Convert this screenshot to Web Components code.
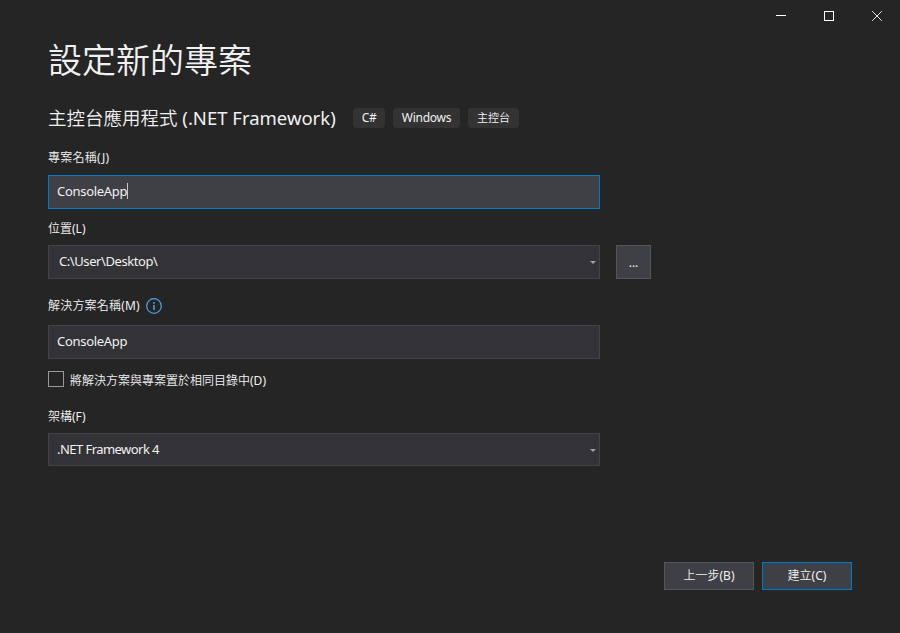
<!DOCTYPE html>
<html lang="zh-Hant">
<head>
<meta charset="utf-8">
<title>設定新的專案</title>
<style>
html,body{margin:0;height:100%;background:#252526}
body{font:350 12px/16px "Noto Sans","Noto Sans CJK TC",sans-serif;color:#f1f1f1;overflow:hidden}
</style>
</head>
<body>
<project-dialog></project-dialog>
<script>
function define(name, html) {
  const t = document.createElement('template');
  t.innerHTML = html;
  customElements.define(name, class extends HTMLElement {
    constructor() {
      super();
      this.attachShadow({mode: 'open'}).append(t.content.cloneNode(true));
    }
  });
}

define('window-controls', `
<style>
:host{display:flex;justify-content:flex-end;height:32px}
svg{width:48px;height:32px;fill:none;stroke:#fff;stroke-width:1}
</style>
<svg viewBox="0 0 48 32"><path d="M20 15.5h10"/></svg>
<svg viewBox="0 0 48 32"><rect x="20.5" y="11.5" width="9" height="9"/></svg>
<svg viewBox="0 0 48 32"><path d="M20.2 11.2l9.6 9.6M29.8 11.2l-9.6 9.6" stroke="#e4e4e4"/></svg>`);

define('tag-chip', `
<style>
:host{display:flex;justify-content:center;box-sizing:border-box;height:20px;line-height:20px;border-radius:4px;background:#333334;white-space:nowrap;font-weight:400}
</style><slot></slot>`);

define('field-label', `
<style>
:host{display:flex;align-items:center;height:16px;white-space:nowrap}
</style><slot></slot>`);

define('info-icon', `
<style>
:host{display:block;width:16px;height:16px;margin-left:6px}
svg{display:block}
</style>
<svg width="16" height="16" viewBox="0 0 16 16"><circle cx="8" cy="8" r="7.3" fill="none" stroke="#4a9fe0" stroke-width="1.3"/><path d="M7.2 4h1.6v1.7H7.2zM7.2 7h1.6v5H7.2z" fill="#4a9fe0"/></svg>`);

define('text-field', `
<style>
:host{display:flex;align-items:center;box-sizing:border-box;width:552px;height:34px;padding:0 8px 2px;border:1px solid #434346;background:#333337;font-size:13px;font-weight:400;letter-spacing:-.3px;white-space:nowrap}
:host([focused]){border-color:#007acc;background:#3f3f46}
i{display:none;width:1px;height:16px;background:#c8c8c8}
:host([focused]) i{display:block}
</style><slot></slot><i></i>`);

define('select-field', `
<style>
:host{display:flex;align-items:center;justify-content:space-between;box-sizing:border-box;width:552px;height:34px;padding:0 3px 2px 8px;border:1px solid #434346;background:#333337;font-size:13px;font-weight:400;white-space:nowrap}
svg{display:block;width:6px;height:3px;margin-top:3px}
</style><span><slot></slot></span><svg viewBox="0 0 6 3"><path d="M0 0h6L3 3z" fill="#a0a0a0"/></svg>`);

define('check-box', `
<style>
:host{display:flex;align-items:center;gap:6px;height:16px;white-space:nowrap}
i{box-sizing:border-box;width:16px;height:16px;border:1px solid #999}
span{padding-top:3px}
</style><i></i><span><slot></slot></span>`);

define('push-button', `
<style>
:host{display:flex;align-items:center;justify-content:center;box-sizing:border-box;width:90px;height:28px;border:1px solid #555;background:#3f3f46;white-space:nowrap}
:host([primary]){border-color:#007acc}
:host([browse]){width:35px;height:34px;padding-top:2px;font-weight:400}
</style><slot></slot>`);

define('project-dialog', `
<style>
:host{display:flex;flex-direction:column;box-sizing:border-box;width:900px;height:633px;background:#252526}
main{display:flex;flex-direction:column;padding-left:48px;flex:1}
h1{margin:4px 0 0;height:48px;font-size:34px;line-height:48px;font-weight:350;white-space:nowrap}
.type{display:flex;align-items:center;gap:8px;margin-top:20px;height:28px}
h2{margin:0;width:297px;font-size:18.5px;line-height:28px;font-weight:350;white-space:nowrap}
.en{font-weight:400}
.row{display:flex;gap:16px}
.l1{margin-top:18px;letter-spacing:.25px}.f1{margin-top:9px}
.l2{margin-top:12px}.f2{margin-top:8px}
.l3{margin-top:19px;letter-spacing:.2px}.f3{margin-top:11px}
.chk{margin-top:12px}
.l4{margin-top:22px}.f4{margin-top:8px;height:33px;letter-spacing:-.55px}
.path{padding-left:10px;letter-spacing:-.42px}
footer{display:flex;justify-content:flex-end;gap:8px;padding:0 48px 43px 0}
</style>
<window-controls></window-controls>
<main>
<h1>設定新的專案</h1>
<div class="type"><h2>主控台應用程式<span class="en"> (.NET Framework)</span></h2><tag-chip style="width:32px;letter-spacing:-.3px">C#</tag-chip><tag-chip style="width:67px;letter-spacing:-.25px">Windows</tag-chip><tag-chip style="width:51px;font-size:11px;font-weight:350">主控台</tag-chip></div>
<field-label class="l1">專案名稱<span class="en">(J)</span></field-label>
<text-field class="f1" focused>ConsoleApp</text-field>
<field-label class="l2">位置<span class="en">(L)</span></field-label>
<div class="row f2"><select-field class="path">C:\\User\\Desktop\\</select-field><push-button browse>...</push-button></div>
<field-label class="l3">解決方案名稱<span class="en">(M)</span><info-icon></info-icon></field-label>
<text-field class="f3">ConsoleApp</text-field>
<check-box class="chk">將解決方案與專案置於相同目錄中<span class="en">(D)</span></check-box>
<field-label class="l4">架構<span class="en">(F)</span></field-label>
<select-field class="f4">.NET Framework 4</select-field>
</main>
<footer><push-button>上一步<span class="en">(B)</span></push-button><push-button primary>建立<span class="en">(C)</span></push-button></footer>`);
</script>
</body>
</html>
